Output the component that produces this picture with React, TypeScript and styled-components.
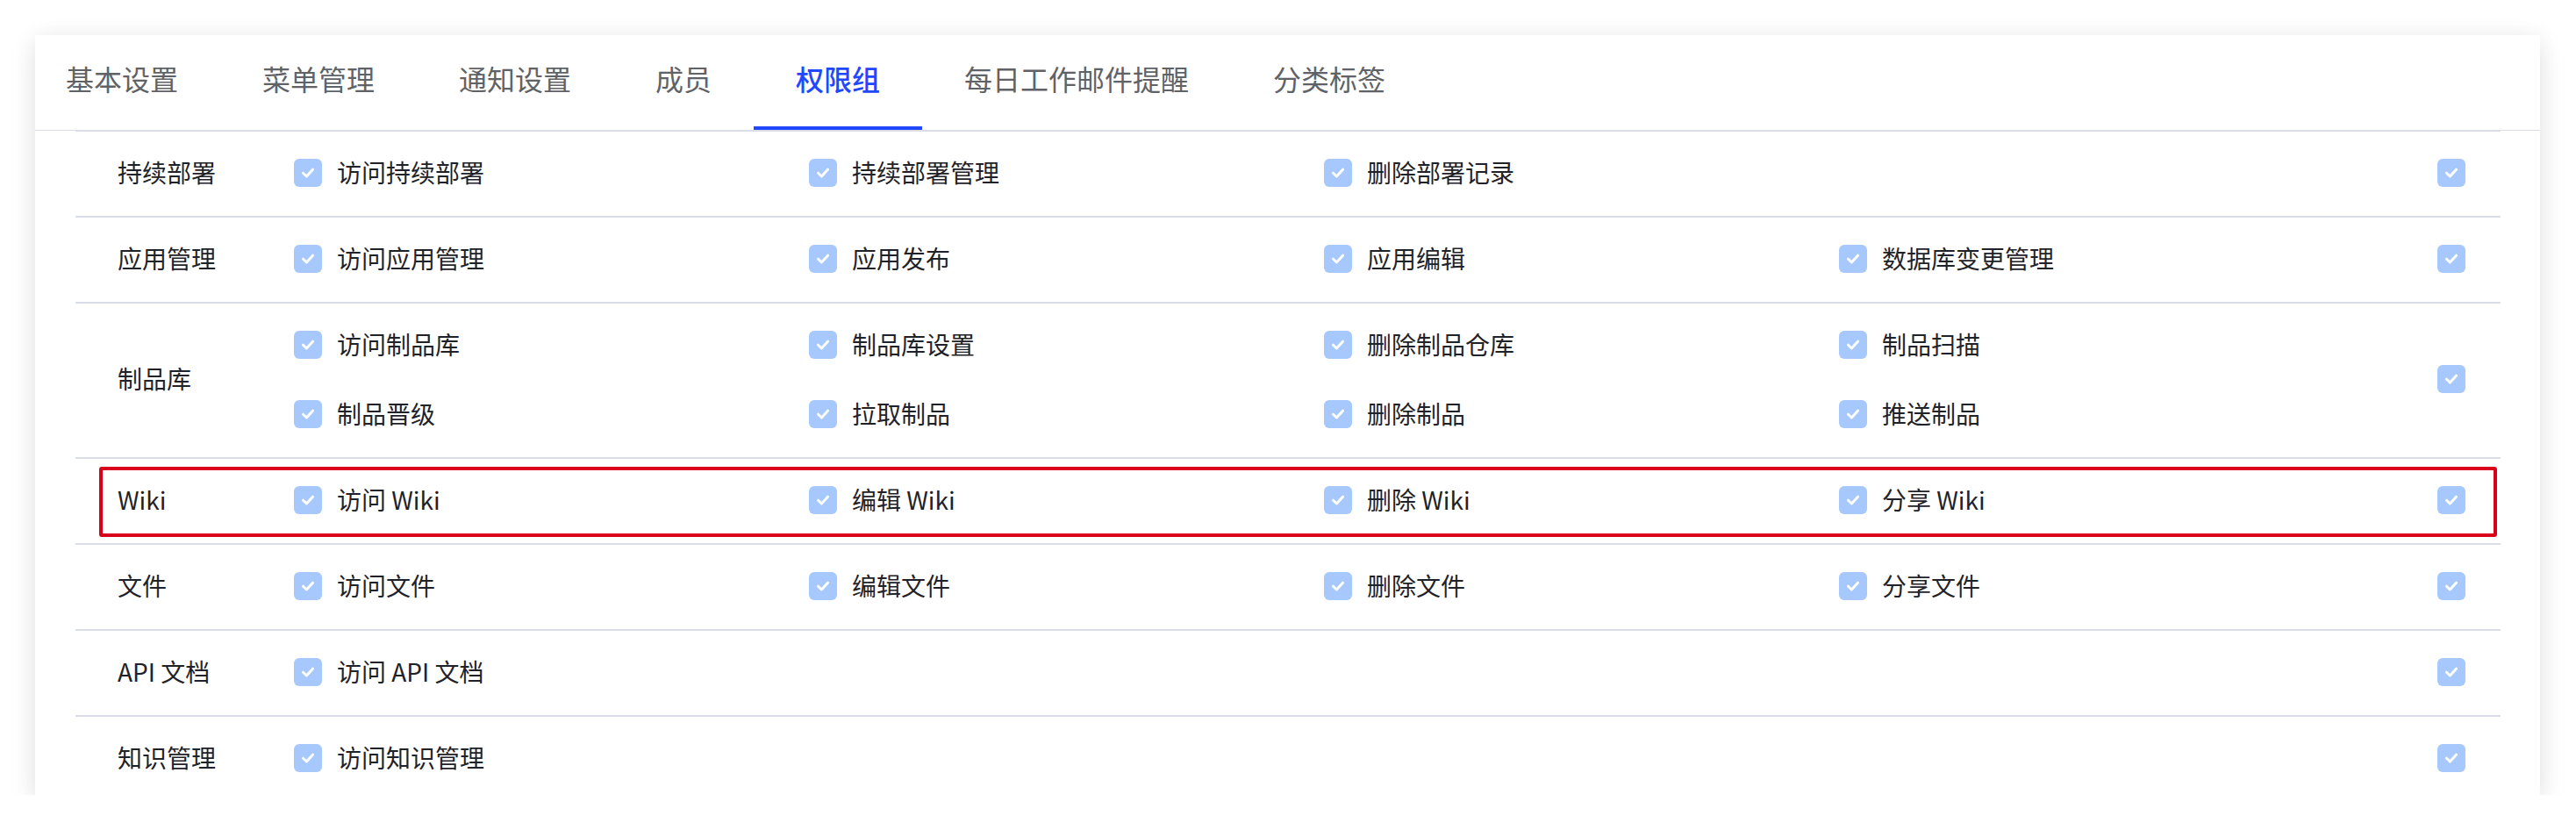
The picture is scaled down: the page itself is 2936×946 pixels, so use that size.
import styled, { createGlobalStyle } from "styled-components";

const GlobalStyle = createGlobalStyle`
  body {
    margin: 0;
    background: #ffffff;
    font-family: "Noto Sans CJK SC", "Noto Sans", sans-serif;
  }
`;

const tabs = ["基本设置", "菜单管理", "通知设置", "成员", "权限组", "每日工作邮件提醒", "分类标签"];
const activeTab = "权限组";

type PermissionGroup = {
  name: string;
  items: string[];
  marked?: boolean;
};

const groups: PermissionGroup[] = [
  { name: "持续部署", items: ["访问持续部署", "持续部署管理", "删除部署记录"] },
  { name: "应用管理", items: ["访问应用管理", "应用发布", "应用编辑", "数据库变更管理"] },
  {
    name: "制品库",
    items: ["访问制品库", "制品库设置", "删除制品仓库", "制品扫描", "制品晋级", "拉取制品", "删除制品", "推送制品"],
  },
  { name: "Wiki", items: ["访问 Wiki", "编辑 Wiki", "删除 Wiki", "分享 Wiki"], marked: true },
  { name: "文件", items: ["访问文件", "编辑文件", "删除文件", "分享文件"] },
  { name: "API 文档", items: ["访问 API 文档"] },
  { name: "知识管理", items: ["访问知识管理"] },
];

const CheckBox = () => (
  <Box>
    <svg width="20" height="20" viewBox="0 0 20 20">
      <path d="M4.5 10.2 L8.4 14 L15.5 6.2" fill="none" stroke="#ffffff" strokeWidth="3" strokeLinecap="round" strokeLinejoin="round" />
    </svg>
  </Box>
);

const App = () => {
  return (
    <>
      <GlobalStyle />
      <Card>
        <TabBar>
          {tabs.map((t) => (
            <Tab key={t} $active={t === activeTab}>
              {t}
            </Tab>
          ))}
        </TabBar>
        <Table>
          {groups.map((g) => (
            <Row key={g.name}>
              <Label>{g.name}</Label>
              <Items>
                {g.items.map((item) => (
                  <Item key={item}>
                    <CheckBox />
                    <ItemText>{item}</ItemText>
                  </Item>
                ))}
              </Items>
              <RowCheck>
                <CheckBox />
              </RowCheck>
              {g.marked && <Marker />}
            </Row>
          ))}
        </Table>
      </Card>
    </>
  );
};

export default App;

const Card = styled.div`
  margin: 40px 0 0 40px;
  width: 2855px;
  height: 866px;
  overflow: hidden;
  background: #ffffff;
  box-shadow: 0 10px 30px rgba(0, 0, 0, 0.1), 0 0 24px rgba(0, 0, 0, 0.04);
`;

const TabBar = styled.div`
  display: flex;
  height: 108px;
  border-bottom: 1px solid #dadde8;
`;

const Tab = styled.div<{ $active?: boolean }>`
  position: relative;
  display: flex;
  align-items: center;
  padding: 0 48px 10px;
  font-size: 32px;
  color: ${(p) => (p.$active ? "#2147ff" : "#5f6368")};
  font-weight: ${(p) => (p.$active ? 500 : 400)};
  white-space: nowrap;

  &:first-child {
    padding-left: 35px;
  }

  &::after {
    content: "";
    position: absolute;
    left: 0;
    right: 0;
    bottom: 0;
    height: 4px;
    background: ${(p) => (p.$active ? "#2147ff" : "transparent")};
  }
`;

const Table = styled.div`
  margin: 0 45px 0 46px;
  border-top: 1px solid #dadde8;
`;

const Row = styled.div`
  position: relative;
  display: flex;
  align-items: center;
  padding: 7px 40px 10px 48px;
  border-bottom: 2px solid #dadde8;
`;

const Label = styled.div`
  flex: 0 0 201px;
  font-size: 28px;
  color: #1f2329;
  padding-bottom: 2px;
`;

const Items = styled.div`
  display: grid;
  grid-template-columns: repeat(4, 587px);
  grid-auto-rows: 79px;
`;

const Item = styled.div`
  display: flex;
  align-items: center;
  gap: 17px;
`;

const ItemText = styled.span`
  font-size: 28px;
  color: #1f2329;
  white-space: nowrap;
  padding-bottom: 2px;
`;

const RowCheck = styled.div`
  margin-left: auto;
  display: flex;
`;

const Box = styled.span`
  display: inline-flex;
  align-items: center;
  justify-content: center;
  flex: 0 0 32px;
  width: 32px;
  height: 32px;
  border-radius: 6px;
  background: #a6c8fd;
`;

const Marker = styled.div`
  position: absolute;
  top: 9px;
  bottom: 7px;
  left: 27px;
  right: 4px;
  border: 4px solid #d9001b;
  border-radius: 3px;
  pointer-events: none;
`;
